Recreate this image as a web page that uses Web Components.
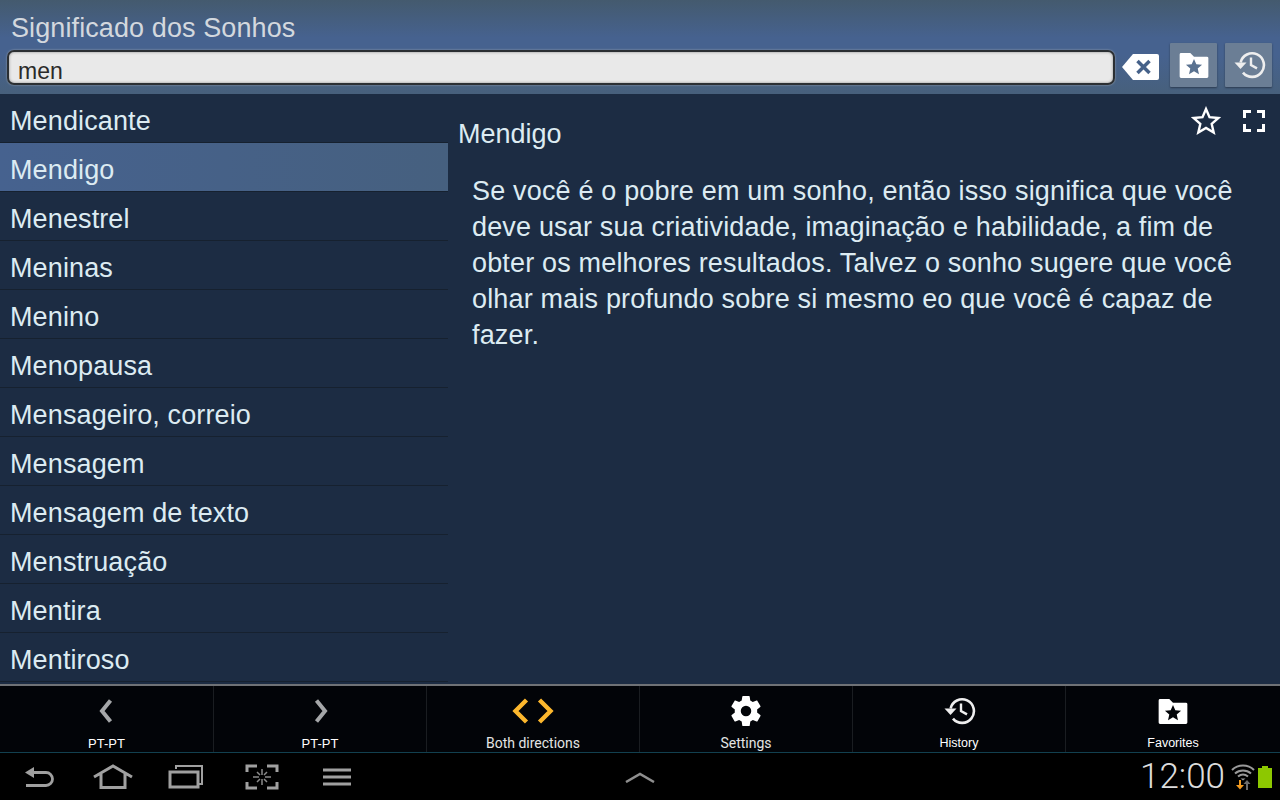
<!DOCTYPE html>
<html lang="pt">
<head>
<meta charset="utf-8">
<title>Significado dos Sonhos</title>
<style>
  html, body { margin: 0; padding: 0; background: #1c2c43; }
  body { width: 1280px; height: 800px; overflow: hidden; font-family: "Liberation Sans", sans-serif; }
</style>
</head>
<body>
<dream-app>
  <dream-header slot="header" title-text="Significado dos Sonhos" query="men"></dream-header>
  <word-list slot="list">
    <word-row>Mendicante</word-row>
    <word-row selected>Mendigo</word-row>
    <word-row>Menestrel</word-row>
    <word-row>Meninas</word-row>
    <word-row>Menino</word-row>
    <word-row>Menopausa</word-row>
    <word-row>Mensageiro, correio</word-row>
    <word-row>Mensagem</word-row>
    <word-row>Mensagem de texto</word-row>
    <word-row>Menstruação</word-row>
    <word-row>Mentira</word-row>
    <word-row>Mentiroso</word-row>
  </word-list>
  <word-detail slot="detail" word="Mendigo">Se você é o pobre em um sonho, então isso significa que você deve usar sua criatividade, imaginação e habilidade, a fim de obter os melhores resultados. Talvez o sonho sugere que você olhar mais profundo sobre si mesmo eo que você é capaz de fazer.</word-detail>
  <tool-bar slot="tools">
    <tool-item icon="left" label="PT-PT" small></tool-item>
    <tool-item icon="right" label="PT-PT" small></tool-item>
    <tool-item icon="both" label="Both directions"></tool-item>
    <tool-item icon="gear" label="Settings"></tool-item>
    <tool-item icon="history" label="History" narrow></tool-item>
    <tool-item icon="favorites" label="Favorites" narrow></tool-item>
  </tool-bar>
  <nav-bar slot="nav"></nav-bar>
</dream-app>

<script>
// shared icons
const ICONS = {
  left: '<svg width="24" height="28" viewBox="0 0 24 28"><path d="M15.500 3.500 7 14l8.500 10.500" fill="none" stroke="#a5a7a9" stroke-width="4"/></svg>',
  right: '<svg width="24" height="28" viewBox="0 0 24 28"><path d="M8.500 3.500 17 14 8.500 24.500" fill="none" stroke="#a5a7a9" stroke-width="4"/></svg>',
  both: '<svg width="44" height="28" viewBox="0 0 44 28"><path d="M15.500 3 4.500 14l11 11M28.500 3l11 11-11 11" fill="none" stroke="#fcb72d" stroke-width="4.400"/></svg>',
  gear: '<svg width="36" height="36" viewBox="0 0 24 24"><path fill="#fff" fill-rule="evenodd" d="M19.400 13c.04-.33.06-.66.06-1s-.02-.67-.06-1l2.100-1.650c.2-.15.25-.42.12-.64l-2-3.460c-.12-.22-.39-.3-.61-.22l-2.490 1c-.52-.4-1.080-.73-1.690-.98l-.38-2.650A.49.49 0 0 0 14 2h-4c-.25 0-.46.18-.49.42l-.38 2.650c-.61.25-1.170.59-1.690.98l-2.490-1c-.23-.09-.49 0-.61.22l-2 3.460c-.13.22-.07.49.12.64L4.570 11c-.04.33-.07.67-.07 1s.03.67.07 1l-2.110 1.650c-.19.15-.25.42-.12.64l2 3.460c.12.22.39.3.61.22l2.490-1c.52.4 1.080.73 1.690.98l.38 2.650c.03.24.24.42.49.42h4c.25 0 .46-.18.49-.42l.38-2.650c.61-.25 1.170-.59 1.690-.98l2.490 1c.23.09.49 0 .61-.22l2-3.460c.12-.22.07-.49-.12-.64L19.400 13zM12 15.500a3.500 3.500 0 1 1 0-7 3.500 3.500 0 0 1 0 7z"/></svg>',
  history: '<svg width="34" height="34" viewBox="0 0 34 34"><path d="M8.600 14.500A11.800 11.800 0 1 1 11 24.600" fill="none" stroke="#eee" stroke-width="2.600"/><path d="M2.500 14.500h12l-6 6.500z" fill="#eee"/><path d="M19 9.500V17l6 3.400" fill="none" stroke="#eee" stroke-width="2.400"/></svg>',
  favorites: '<svg width="30" height="25" viewBox="0 0 32 27"><path fill="#fff" d="M2 0h10l4 4h14a1.500 1.500 0 0 1 1.500 1.500v20A1.500 1.500 0 0 1 30 27H2A1.500 1.500 0 0 1 .5 25.500v-24A1.500 1.500 0 0 1 2 0z"/><path fill="#020408" d="m16 6.500 2.500 5.700 6.200.5-4.700 4.100 1.400 6.100-5.400-3.200-5.400 3.200 1.400-6.100-4.700-4.100 6.200-.5z"/></svg>'
};

class DreamApp extends HTMLElement {
  constructor() {
    super();
    this.attachShadow({ mode: 'open' });
    this.shadowRoot.innerHTML = `
      <style>
        :host { display: flex; flex-direction: column; width: 1280px; height: 800px; }
        .main { display: grid; grid-template-columns: 448px 1fr; height: 590px; background: #1c2c43; }
      </style>
      <slot name="header"></slot>
      <div class="main"><slot name="list"></slot><slot name="detail"></slot></div>
      <slot name="tools"></slot>
      <slot name="nav"></slot>
    `;
  }
}

class DreamHeader extends HTMLElement {
  constructor() {
    super();
    this.attachShadow({ mode: 'open' });
    this.shadowRoot.innerHTML = `
      <style>
        :host { display: block; height: 94px; box-sizing: border-box; padding: 12px 8px 0 7px;
          background: linear-gradient(180deg, #445a6e 0%, #46628f 40%, #46628f 58%, #47607c 100%); }
        h1 { margin: 0 0 0 4px; font: 400 27px/32px "Liberation Sans", sans-serif; letter-spacing: .1px; color: #d3d8de; white-space: nowrap; }
        .row { display: flex; align-items: flex-start; margin-top: 6px; }
        .field { width: 1108px; height: 35px; box-sizing: border-box; border: 2px solid #2b2f33; border-radius: 7px;
          background: #e9e9e9; box-shadow: inset 0 0 3px #8a8a8a, 0 0 2px #a5adb6; padding-left: 9px;
          font: 400 23px/38px "Liberation Sans", sans-serif; color: #2a2a2a; }
        .clear { margin: 3px 0 0 7px; width: 37px; height: 28px; }
        .btn { width: 47px; height: 44px; margin-left: 11px; margin-top: -7px; background: #6b7e95; box-shadow: 0 1px 2px #2c3b50;
          display: flex; align-items: center; justify-content: center; border-radius: 1px; }
        .btn + .btn { margin-left: 8px; }
      </style>
      <h1>${this.getAttribute('title-text')}</h1>
      <div class="row">
        <div class="field">${this.getAttribute('query')}</div>
        <svg class="clear" viewBox="0 0 37 28"><path fill="#fff" d="M11 1h24a2 2 0 0 1 2 2v22a2 2 0 0 1-2 2H11L0 14z"/><path d="m15.500 8 12 12M27.500 8l-12 12" stroke="#456189" stroke-width="3.500"/></svg>
        <div class="btn"><svg width="30" height="25" viewBox="0 0 32 27"><path fill="#fff" d="M2 0h10l4 4h14a1.500 1.500 0 0 1 1.500 1.500v20A1.500 1.500 0 0 1 30 27H2A1.500 1.500 0 0 1 .5 25.500v-24A1.500 1.500 0 0 1 2 0z"/><path fill="#5a7290" d="m16 6.500 2.500 5.700 6.200.5-4.700 4.100 1.400 6.100-5.400-3.200-5.400 3.200 1.400-6.100-4.700-4.100 6.200-.5z"/></svg></div>
        <div class="btn">${ICONS.history}</div>
      </div>
    `;
  }
}

class WordList extends HTMLElement {
  constructor() {
    super();
    this.attachShadow({ mode: 'open' });
    this.shadowRoot.innerHTML = `
      <style>:host { display: block; overflow: hidden; }</style>
      <slot></slot>
    `;
  }
}

class WordRow extends HTMLElement {
  constructor() {
    super();
    this.attachShadow({ mode: 'open' });
    this.shadowRoot.innerHTML = `
      <style>
        :host { display: block; height: 49px; box-sizing: border-box; padding: 7px 0 0 10px; border-bottom: 1px solid #16212f;
          font: 400 27px/40px "Liberation Sans", sans-serif; letter-spacing: .12px; color: #dcebf2; white-space: nowrap; }
        :host([selected]) { background: linear-gradient(90deg, #46628f 0%, #46607f 100%); }
      </style>
      <slot></slot>
    `;
  }
}

class WordDetail extends HTMLElement {
  constructor() {
    super();
    this.attachShadow({ mode: 'open' });
    this.shadowRoot.innerHTML = `
      <style>
        :host { display: block; position: relative; padding: 20px 24px 0 10px; color: #dcebf2; }
        h2 { margin: 0; font: 400 27px/40px "Liberation Sans", sans-serif; }
        p { margin: 19px 0 0 14px; font: 400 27px/36px "Liberation Sans", sans-serif; letter-spacing: .17px; }
        .acts { position: absolute; top: 12px; right: 15px; display: flex; gap: 22px; align-items: center; }
      </style>
      <h2>${this.getAttribute('word')}</h2>
      <p><slot></slot></p>
      <div class="acts">
        <svg width="30" height="30" viewBox="0 0 30 30"><path d="m15 3 3.500 8.200 8.900.8-6.700 5.900 2 8.700-7.700-4.600-7.700 4.600 2-8.700L2.600 12l8.900-.8z" fill="none" stroke="#fff" stroke-width="2.400"/></svg>
        <svg width="22" height="22" viewBox="0 0 22 22"><path d="M1.500 8V1.500H8M14 1.500h6.500V8M20.500 14v6.500H14M8 20.500H1.500V14" fill="none" stroke="#fff" stroke-width="3"/></svg>
      </div>
    `;
  }
}

class ToolBar extends HTMLElement {
  constructor() {
    super();
    this.attachShadow({ mode: 'open' });
    this.shadowRoot.innerHTML = `
      <style>
        :host { display: grid; grid-template-columns: repeat(5, 213px) 1fr; height: 69px; box-sizing: border-box;
          border-top: 2px solid #6f7276; border-bottom: 1px solid #12404f; background: #020408; }
      </style>
      <slot></slot>
    `;
  }
}

class ToolItem extends HTMLElement {
  constructor() {
    super();
    this.attachShadow({ mode: 'open' });
    this.shadowRoot.innerHTML = `
      <style>
        :host { display: flex; flex-direction: column; align-items: center; box-sizing: border-box;
          border-left: 1px solid #1a1d21; color: #e4e4e4; font: 400 14px/15px Roboto, sans-serif; }
        :host(:first-child) { border-left: 0; }
        :host([small]) { color: #fff; font: 400 13px/15px "Liberation Sans", sans-serif; }
        :host([narrow]) { color: #fff; font: 400 12.500px/15px "Liberation Sans", sans-serif; }
        .ico { height: 50px; display: flex; align-items: center; justify-content: center; }
        .lbl { white-space: nowrap; }
      </style>
      <div class="ico">${ICONS[this.getAttribute('icon')]}</div>
      <div class="lbl">${this.getAttribute('label')}</div>
    `;
  }
}

class NavBar extends HTMLElement {
  constructor() {
    super();
    this.attachShadow({ mode: 'open' });
    this.shadowRoot.innerHTML = `
      <style>
        :host { display: flex; align-items: center; height: 47px; background: #000; padding: 0 8px 0 22px; }
        svg { display: block; flex: none; }
        .left { display: flex; align-items: center; gap: 37px; width: 602px; flex: none; }
        .rec { margin-left: -2px; }
        .shot { margin-left: 4px; }
        .menu { margin-left: 7px; }
        .clock { margin-left: auto; margin-right: 1px; font: 300 35px/47px Roboto, sans-serif; color: #dcdcdc; }
        .status { display: flex; align-items: center; gap: 3px; margin-left: 5px; }
      </style>
      <div class="left">
        <svg width="34" height="26" viewBox="0 0 34 26"><path d="M12 3 3 8.500l9 5.500z" fill="#a0a0a0"/><path d="M9 8.500h15a6.500 6.500 0 0 1 0 13H4" fill="none" stroke="#a0a0a0" stroke-width="2.800"/></svg>
        <svg width="40" height="26" viewBox="0 0 40 26"><path d="M1 13 20 2l19 11M8 10v13.500h24V10" fill="none" stroke="#a0a0a0" stroke-width="3"/></svg>
        <svg class="rec" width="36" height="26" viewBox="0 0 36 26"><path d="M8 5V2h26v18h-4" fill="none" stroke="#a0a0a0" stroke-width="2"/><rect x="2" y="8" width="28" height="15" fill="none" stroke="#a0a0a0" stroke-width="3"/></svg>
        <svg class="shot" width="34" height="26" viewBox="0 0 34 26"><path d="M12 2H2v6M22 2h10v6M2 18v6h10M32 18v6H22" fill="none" stroke="#a0a0a0" stroke-width="3"/><path d="M17 5v6M17 15v6M8 13h6M20 13h6M12 8l3 3M22 8l-3 3M12 18l3-3M22 18l-3-3" stroke="#8a8a8a" stroke-width="1.500"/></svg>
        <svg class="menu" width="28" height="20" viewBox="0 0 28 20"><path d="M0 3h28M0 10h28M0 17h28" stroke="#a0a0a0" stroke-width="3"/></svg>
      </div>
      <svg width="32" height="12" viewBox="0 0 32 12"><path d="M2 11 16 3l14 8" fill="none" stroke="#8f8f8f" stroke-width="2.500"/></svg>
      <div class="clock">12:00</div>
      <div class="status">
        <svg width="24" height="28" viewBox="0 0 24 28"><path d="M1 7C7 1 17 1 23 7M4 10.500c4.500-4 11.500-4 16 0M7 13.500c3-2.500 7-2.500 10 0" fill="none" stroke="#9a9a9a" stroke-width="2"/><path d="m9.500 15.500 2.500 2 2.500-2z" fill="#9a9a9a"/><path d="M9 17v7" stroke="#f39b1f" stroke-width="2"/><path d="m5 22 4 4.500 4-4.500z" fill="#f39b1f"/><path d="M16 27v-7" stroke="#6d6d6d" stroke-width="2"/><path d="m12.500 21 3.500-4 3.500 4z" fill="#6d6d6d"/></svg>
        <svg width="14" height="22" viewBox="0 0 14 22"><path d="M4 0h6v2h4v20H0V2h4z" fill="#8dc800"/></svg>
      </div>
    `;
  }
}

customElements.define('dream-app', DreamApp);
customElements.define('dream-header', DreamHeader);
customElements.define('word-list', WordList);
customElements.define('word-row', WordRow);
customElements.define('word-detail', WordDetail);
customElements.define('tool-bar', ToolBar);
customElements.define('tool-item', ToolItem);
customElements.define('nav-bar', NavBar);
</script>
</body>
</html>
